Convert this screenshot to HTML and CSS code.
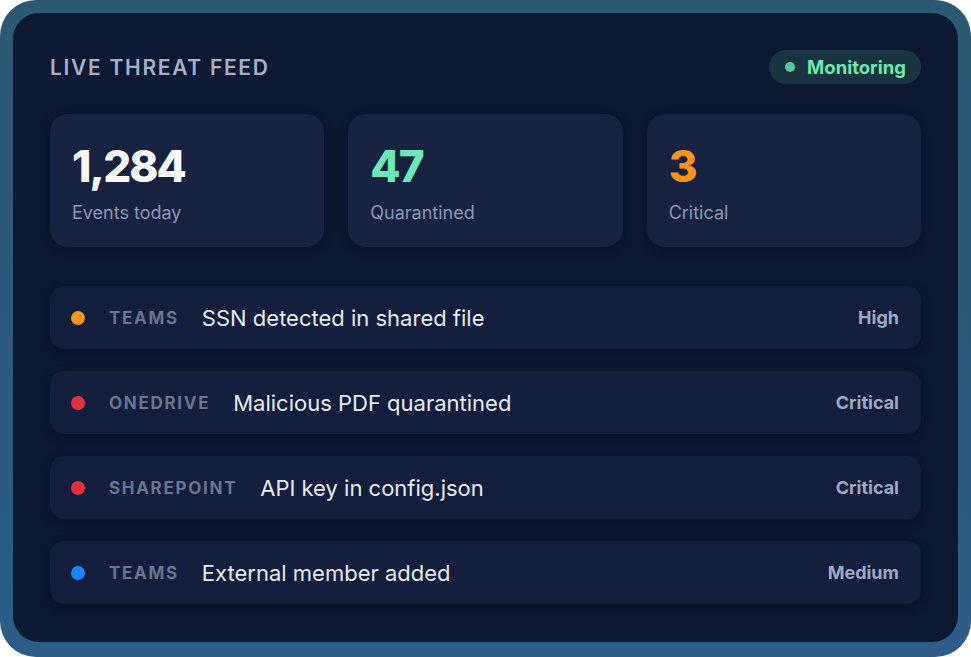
FILE: index.html
```html
<!DOCTYPE html>
<html lang="en">
<head>
<meta charset="utf-8">
<title>Live Threat Feed</title>
<link rel="stylesheet" href="styles.css">
</head>
<body>
<div class="frame">
  <div class="panel">
    <header class="head">
      <h1 class="title">LIVE THREAT FEED</h1>
      <div class="pill"><span class="pill-dot"></span>Monitoring</div>
    </header>
    <section class="stats">
      <div class="stat"><div class="num num-white">1,284</div><div class="label">Events today</div></div>
      <div class="stat"><div class="num num-green">47</div><div class="label">Quarantined</div></div>
      <div class="stat"><div class="num num-orange">3</div><div class="label">Critical</div></div>
    </section>
    <section class="feed">
      <div class="row"><span class="dot dot-orange"></span><span class="src">TEAMS</span><span class="msg">SSN detected in shared file</span><span class="sev">High</span></div>
      <div class="row"><span class="dot dot-red"></span><span class="src">ONEDRIVE</span><span class="msg">Malicious PDF quarantined</span><span class="sev">Critical</span></div>
      <div class="row"><span class="dot dot-red"></span><span class="src">SHAREPOINT</span><span class="msg">API key in config.json</span><span class="sev">Critical</span></div>
      <div class="row"><span class="dot dot-blue"></span><span class="src">TEAMS</span><span class="msg">External member added</span><span class="sev">Medium</span></div>
    </section>
  </div>
</div>
</body>
</html>
```
FILE: styles.css
```css
* { box-sizing: border-box; }
html, body { margin: 0; padding: 0; background: #ffffff; }
body { font-family: Inter, "Noto Sans", "Liberation Sans", sans-serif; }

.frame {
  width: 971px;
  height: 657px;
  border-radius: 36px;
  padding: 13px 13px 15px 13px;
  background: linear-gradient(180deg, #2b5872 0%, #2c5a7c 60%, #2d5d88 100%);
}

.panel {
  height: 100%;
  border-radius: 26px;
  background: #0d1833;
  padding: 37px 37px 0 37px;
  display: flex;
  flex-direction: column;
}

.head {
  display: flex;
  align-items: center;
  justify-content: space-between;
  height: 34px;
}

.title {
  margin: 0;
  font-size: 21px;
  font-weight: 600;
  letter-spacing: 1.7px;
  color: #a3b0c6;
}

.pill {
  display: flex;
  align-items: center;
  gap: 12px;
  height: 34px;
  padding: 0 15px 0 16px;
  border-radius: 17px;
  background: #1a3340;
  color: #6ee7ad;
  font-size: 18.5px;
  font-weight: 700;
}

.pill-dot {
  width: 10px;
  height: 10px;
  border-radius: 50%;
  background: #5ec49c;
}

.stats {
  display: grid;
  grid-template-columns: repeat(3, 1fr);
  gap: 24px;
  margin-top: 30px;
}

.stat {
  height: 133px;
  border-radius: 18px;
  background: #172240;
  padding: 30px 22px 0 22px;
  box-shadow: 0 2px 8px rgba(4, 10, 28, 0.35);
}

.num {
  font-size: 44px;
  line-height: 44px;
  font-weight: 800;
  letter-spacing: -1.9px;
}
.num-white { color: #f7f9fc; }
.num-green { color: #6ee7b7; }
.num-orange { color: #f7931e; }

.label {
  margin-top: 14px;
  font-size: 18px;
  line-height: 22px;
  color: #8797b3;
}

.feed {
  display: flex;
  flex-direction: column;
  gap: 22px;
  margin-top: 39px;
}

.row {
  height: 63px;
  border-radius: 14px;
  background: #131e3c;
  box-shadow: 0 3px 10px rgba(4, 10, 28, 0.4);
  display: flex;
  align-items: center;
  padding: 0 22px 0 21px;
}

.dot {
  width: 14px;
  height: 14px;
  border-radius: 50%;
  flex: none;
}
.dot-orange { background: #f7941d; }
.dot-red { background: #e2303c; }
.dot-blue { background: #1a84ff; }

.src {
  margin-left: 24px;
  font-size: 17px;
  font-weight: 700;
  letter-spacing: 1.7px;
  color: #67758f;
}

.msg {
  margin-left: 23px;
  font-size: 22px;
  color: #e6ebf5;
  flex: 1;
}

.sev {
  font-size: 18px;
  font-weight: 700;
  color: #9ca8bf;
}
```
